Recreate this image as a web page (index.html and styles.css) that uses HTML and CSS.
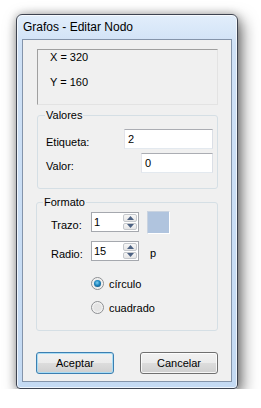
FILE: index.html
```html
<!DOCTYPE html>
<html lang="es">
<head>
    <meta charset="UTF-8">
    <title>Grafos - Editar Nodo</title>
    <link rel="stylesheet" href="styles.css">
</head>
<body>
<div class="window">
    <div class="titlebar">Grafos - Editar Nodo</div>
    <div class="client">
        <div class="coords">
            <div class="coord">X = 320</div>
            <div class="coord">Y = 160</div>
        </div>

        <fieldset class="group valores">
            <legend>Valores</legend>
            <div class="field">
                <span class="lbl">Etiqueta:</span>
                <div class="text wide">2</div>
            </div>
            <div class="field">
                <span class="lbl">Valor:</span>
                <div class="text narrow">0</div>
            </div>
        </fieldset>

        <fieldset class="group formato">
            <legend>Formato</legend>
            <div class="spinrow">
                <span class="lbl name">Trazo:</span>
                <div class="numeric">
                    <div class="num">1</div>
                    <div class="spin">
                        <div class="arrow"><svg width="7" height="4" viewBox="0 0 7 4"><path d="M0 4L3.5 0L7 4Z" fill="#4d6283"/></svg></div>
                        <div class="arrow"><svg width="7" height="4" viewBox="0 0 7 4"><path d="M0 0L7 0L3.5 4Z" fill="#4d6283"/></svg></div>
                    </div>
                </div>
                <div class="swatch"></div>
            </div>
            <div class="spinrow second">
                <span class="lbl name">Radio:</span>
                <div class="numeric">
                    <div class="num">15</div>
                    <div class="spin">
                        <div class="arrow"><svg width="7" height="4" viewBox="0 0 7 4"><path d="M0 4L3.5 0L7 4Z" fill="#4d6283"/></svg></div>
                        <div class="arrow"><svg width="7" height="4" viewBox="0 0 7 4"><path d="M0 0L7 0L3.5 4Z" fill="#4d6283"/></svg></div>
                    </div>
                </div>
                <span class="lbl unit">p</span>
            </div>
            <div class="options">
                <div class="option first"><span class="radio checked"></span><span>círculo</span></div>
                <div class="option"><span class="radio"></span><span>cuadrado</span></div>
            </div>
        </fieldset>

        <div class="buttons">
            <div class="btn default">Aceptar</div>
            <div class="btn">Cancelar</div>
        </div>
    </div>
</div>
</body>
</html>
```

FILE: styles.css
```css
* {
    box-sizing: border-box;
}

body {
    margin: 0;
    background: #fff;
    font: 11px "Liberation Sans", Arial, sans-serif;
    color: #000;
}

.window {
    margin: 14px 0 0 16px;
    width: 222px;
    height: 375px;
    display: flex;
    flex-direction: column;
    border: 1px solid #3d4350;
    border-radius: 6px 6px 4px 4px;
    background: linear-gradient(#e2eefb, #cfe1f6 30px, #c4daf3);
    box-shadow: 4px 6px 16px rgba(0, 0, 0, 0.55), 0 0 8px rgba(0, 0, 0, 0.25), inset 0 0 0 1px rgba(255, 255, 255, 0.7);
}

.titlebar {
    height: 24px;
    line-height: 24px;
    padding-left: 6px;
    font-size: 12px;
}

.client {
    flex: 1;
    margin: 0 5px 6px;
    border: 1px solid #8494aa;
    background: #f0f0f0;
    padding: 9px 13px 0 14px;
}

.coords {
    height: 56px;
    border: 1px solid;
    border-color: #a0a0a0 #e3e3e3 #e3e3e3 #a0a0a0;
    padding: 1px 0 0 12px;
}

.coord {
    line-height: 13px;
}

.coord + .coord {
    margin-top: 12px;
}

fieldset.group {
    margin: 4px 0 0;
    padding: 7px 4px 15px 8px;
    border: 1px solid #d5dfe5;
    border-radius: 3px;
    min-width: 0;
}

legend {
    padding: 0 1px;
    margin-left: -1px;
    line-height: 13px;
}

.lbl {
    line-height: 20px;
    padding-top: 3px;
}

.field {
    display: flex;
    height: 20px;
}

.field + .field {
    margin-top: 4px;
}

.text {
    margin-left: auto;
    height: 20px;
    border: 1px solid;
    border-color: #abadb3 #dbdfe6 #e3e9ef #e2e3ea;
    background: #fff;
    padding: 0 3px;
    line-height: 18px;
}

.wide {
    width: 89px;
}

.narrow {
    width: 72px;
}

fieldset.formato {
    margin: 7px 0 0 -1px;
    padding: 3px 4px 16px 7px;
}

.spinrow {
    display: flex;
    align-items: flex-start;
    height: 20px;
    padding-left: 7px;
}

.spinrow.second {
    margin-top: 9px;
}

.name {
    width: 40px;
}

.numeric {
    width: 48px;
    height: 20px;
    display: flex;
    border: 1px solid #a5a8ae;
    background: #fff;
}

.num {
    flex: 1;
    padding-left: 2px;
    line-height: 18px;
}

.spin {
    width: 16px;
    display: flex;
    flex-direction: column;
    padding: 1px;
    gap: 1px;
}

.arrow {
    flex: 1;
    display: flex;
    align-items: center;
    justify-content: center;
    border: 1px solid #c5c8cc;
    border-radius: 2px;
    background: linear-gradient(#f7f7f7, #e6e6e6);
}

.arrow svg {
    display: block;
}

.swatch {
    margin: -1px 0 0 8px;
    width: 23px;
    height: 23px;
    background: #b0c4de;
    border: 1px solid;
    border-color: #c9d3e0 #fff #fff #c9d3e0;
}

.unit {
    margin-left: 11px;
    padding-top: 2px;
}

.options {
    padding-left: 47px;
}

.option {
    display: flex;
    align-items: center;
    height: 13px;
    margin-top: 11px;
    gap: 5px;
}

.option.first {
    margin-top: 16px;
}

.radio {
    width: 13px;
    height: 13px;
    border-radius: 50%;
    border: 1px solid #8d8f92;
    background: radial-gradient(circle at 50% 50%, #e4e4e4 0, #e4e4e4 3.5px, #f7f7f7 5.5px);
    display: flex;
    align-items: center;
    justify-content: center;
}

.radio.checked::after {
    content: "";
    width: 7px;
    height: 7px;
    border-radius: 50%;
    background: radial-gradient(circle at 45% 40%, #7fd0f2 0, #1d86c0 45%, #0d3f67 100%);
}

.buttons {
    display: flex;
    justify-content: space-between;
    margin: 21px 0 0 -1px;
}

.btn {
    width: 78px;
    height: 22px;
    line-height: 20px;
    text-align: center;
    border: 1px solid #707070;
    border-radius: 3px;
    background: linear-gradient(#f2f2f2, #ebebeb 50%, #dddddd 50%, #cfcfcf);
    box-shadow: inset 0 0 0 1px rgba(255, 255, 255, 0.8);
}

.btn.default {
    border-color: #3c7fb1;
    box-shadow: inset 0 0 0 1px #a9dcf4;
}
```
